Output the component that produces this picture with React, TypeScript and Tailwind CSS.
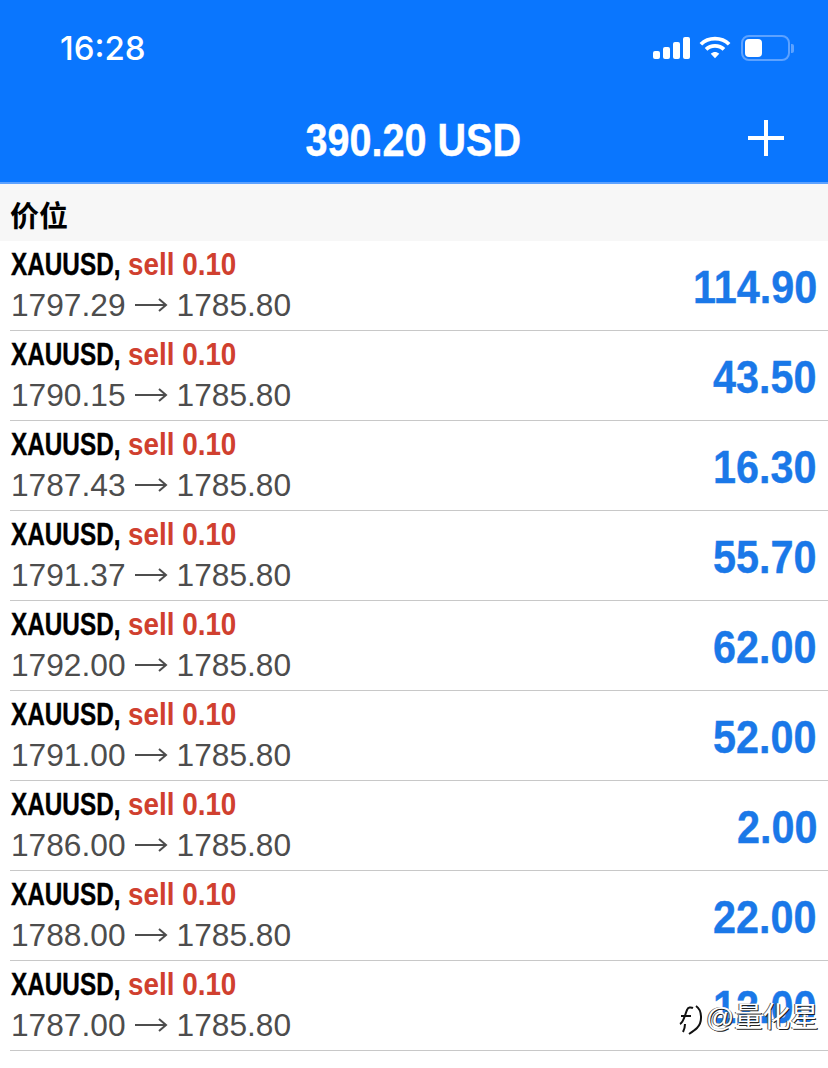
const rows = [
  { open: '1797.29', profit: '114.90' },
  { open: '1790.15', profit: '43.50' },
  { open: '1787.43', profit: '16.30' },
  { open: '1791.37', profit: '55.70' },
  { open: '1792.00', profit: '62.00' },
  { open: '1791.00', profit: '52.00' },
  { open: '1786.00', profit: '2.00' },
  { open: '1788.00', profit: '22.00' },
  { open: '1787.00', profit: '12.00' },
];

const StatusIcons = () => (
  <div className="flex items-center">
    <svg width="38" height="24" viewBox="0 0 38 24" fill="#ffffff">
      <rect x="0" y="15" width="7" height="8" rx="2" />
      <rect x="10" y="11" width="7" height="12" rx="2" />
      <rect x="20" y="6" width="7" height="17" rx="2" />
      <rect x="30" y="1" width="7" height="22" rx="2" />
    </svg>
    <svg className="ml-[8px]" width="32" height="26" viewBox="0 0 34 26" fill="none" stroke="#ffffff" strokeWidth="4">
      <path d="M2 9 C10 1 24 1 32 9" />
      <path d="M7.5 14.5 C12.5 9.5 21.5 9.5 26.5 14.5" />
      <path d="M12.5 19 L17 24 L21.5 19 C18.5 16.5 15.5 16.5 12.5 19 Z" fill="#ffffff" stroke="none" />
    </svg>
    <div className="ml-[10px] flex items-center">
      <div className="flex h-[26px] w-[49px] items-center rounded-[8px] border-2 border-[#5da2ff] p-[2px]">
        <div className="h-full w-[17px] rounded-[4px] bg-white" />
      </div>
      <div className="ml-[1px] h-[9px] w-[3px] rounded-r-[2px] bg-[#5da2ff]" />
    </div>
  </div>
);

const Arrow = () => (
  <svg className="mx-[9px] inline-block" width="33" height="16" viewBox="0 0 33 16" fill="none" stroke="#4d4d4d" strokeWidth="2">
    <path d="M0 8 H31 M24 2 L31 8 L24 14" />
  </svg>
);

const Row = ({ open, profit }: { open: string; profit: string }) => (
  <div className="ml-[10px] flex h-[90px] items-center justify-between border-b border-[#c8c8c8] pr-[11px]">
    <div className="min-w-0 pl-[1px]">
      <div className="flex h-[36px] -translate-y-[1px] whitespace-nowrap text-[32px] leading-[36px] font-bold">
        <span className="w-[117px] origin-left scale-x-[0.76] text-black [-webkit-text-stroke:0.4px_#000000]">XAUUSD,</span>
        <span className="origin-left scale-x-[0.87] text-[#d0402f]">sell 0.10</span>
      </div>
      <div className="mt-[2px] flex h-[40px] items-center whitespace-nowrap text-[31.7px] leading-[40px] text-[#4d4d4d]">
        <span>{open}</span>
        <Arrow />
        <span>1785.80</span>
      </div>
    </div>
    <div className="origin-right scale-x-[0.88] whitespace-nowrap pt-[2px] text-[47px] leading-none font-bold text-[#1a78e8] [-webkit-text-stroke:0.4px_#1a78e8]">
      {profit}
    </div>
  </div>
);

export default function App() {
  return (
    <div className="relative h-[1068px] w-[828px] overflow-hidden bg-white font-['Liberation_Sans','Noto_Sans_CJK_SC',sans-serif]">
      <header className="h-[184px] border-b-2 border-[#5da2ff] bg-[#0a76fe] text-white">
        <div className="flex h-[96px] items-center justify-between pr-[34px] pl-[60px]">
          <span className="pt-[1px] font-['Inter',sans-serif] text-[33px] font-medium">16:28</span>
          <StatusIcons />
        </div>
        <div className="relative flex h-[86px] items-center justify-center">
          <span className="-translate-x-[1px] scale-x-[0.86] whitespace-nowrap pt-[2px] text-[46px] font-bold [-webkit-text-stroke:0.4px_#ffffff]">390.20 USD</span>
          <svg
            className="absolute top-[24px] right-[44px]"
            width="36"
            height="36"
            viewBox="0 0 36 36"
            stroke="#ffffff"
            strokeWidth="4"
          >
            <path d="M18 0 V36 M0 18 H36" />
          </svg>
        </div>
      </header>
      <div className="flex h-[57px] items-center bg-[#f7f7f7] pt-[10px] pl-[10px] text-[29px] font-semibold text-black">价位</div>
      {rows.map((r) => (
        <Row key={r.open} open={r.open} profit={r.profit} />
      ))}
      {/* watermark */}
      <div className="absolute top-[1000px] left-[678px] flex items-center text-[28px] leading-[36px] text-white [text-shadow:1px_1px_0_#222,-1px_0_0_#555]">
        <svg width="28" height="36" viewBox="0 0 28 36" fill="none" stroke="#111111" strokeWidth="2">
          <path d="M2 24 C6 22 7 14 9 10 C10 7 13 7 15 8 M3 16 H13 M7 24 C7 28 6 30 5 32" />
          <path d="M18 6 C24 10 25 22 19 28 C17 30 14 32 11 34" />
        </svg>
        <span>@量化星</span>
      </div>
    </div>
  );
}
